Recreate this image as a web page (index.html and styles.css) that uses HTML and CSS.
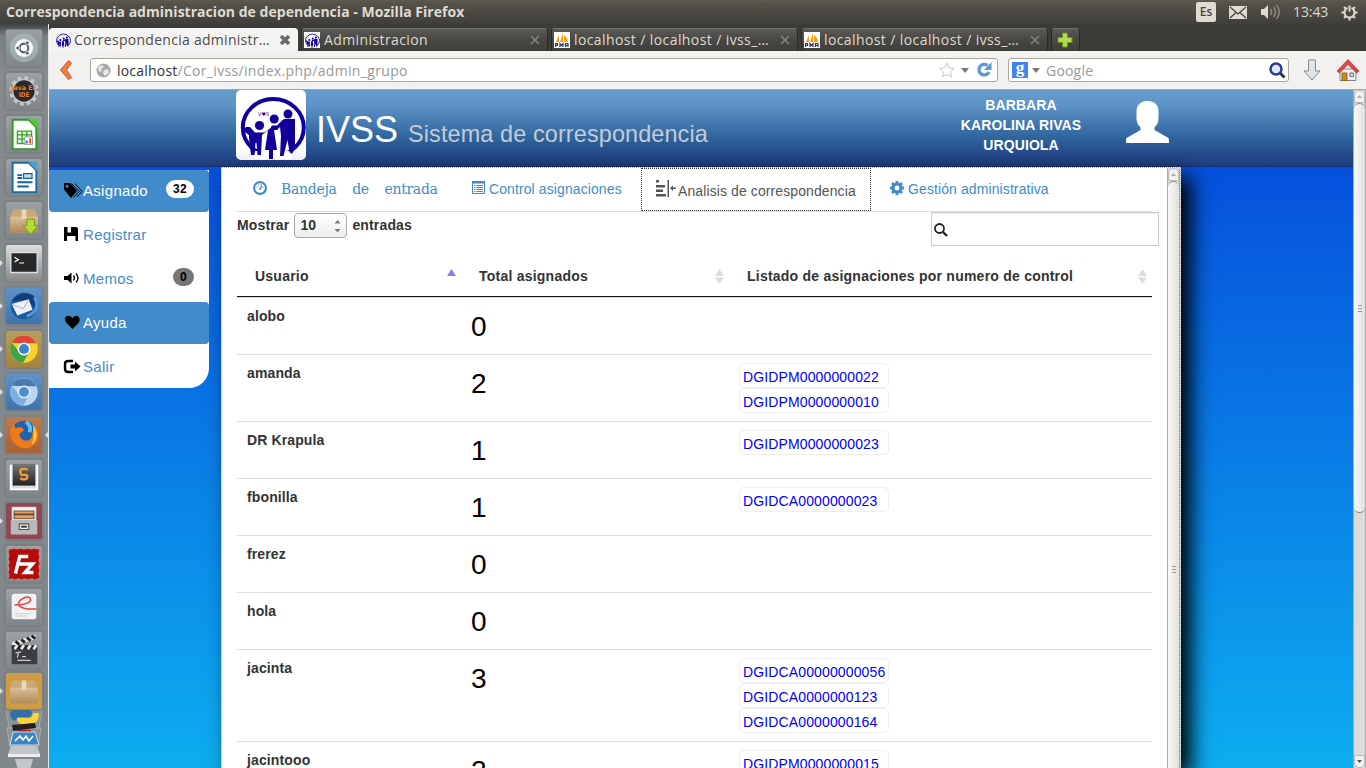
FILE: index.html
```html
<!DOCTYPE html>
<html lang="es">
<head>
<meta charset="utf-8">
<title>Correspondencia administracion de dependencia</title>
<link rel="stylesheet" href="styles.css">
</head>
<body>
<svg width="0" height="0" class="defs">
  <defs>
    <linearGradient id="steel" x1="0" y1="0" x2="0" y2="1"><stop offset="0" stop-color="#777"/><stop offset="1" stop-color="#222"/></linearGradient>
    <linearGradient id="carton" x1="0" y1="0" x2="0" y2="1"><stop offset="0" stop-color="#dcc09a"/><stop offset="1" stop-color="#b08a59"/></linearGradient>
    <symbol id="logo" viewBox="0 0 70 70">
      <ellipse cx="37.300" cy="37.500" rx="30.500" ry="28.500" fill="none" stroke="#12009a" stroke-width="4"/>
      <path d="M19 61h37v8H19z" fill="#fff"/>
      <g fill="#12009a"><circle cx="23.500" cy="35.500" r="4.600"/><circle cx="38.200" cy="29" r="4.500"/><circle cx="52" cy="24" r="4.500"/>
      <path d="M10 37l4 0 5 5.500h9l6-4 2-3h5l5-5 2-1.500h11v29l-3 6-2.500-2-2-12-4 16h-3.500l1-20-1-9-3 3h-3l3 20h-4v9h-4v-9h-4l3-20-6 5-1 20h-3.500l-1-12h-1l-1 12h-3.500l-2-17 0-3-7-5z"/></g>
    </symbol>
    <symbol id="pma" viewBox="0 0 16 16"><path fill="#fff" d="M0 0h16v16H0z"/><path fill="#f89c0e" d="M2 10L5 3v7zM6 10L9 1v9zM10 10V3q3 2 4 7z"/><path d="M1.500 15v-3.500h2v2h-2M6 15v-3.500l1.500 2 1.500-2V15M11.500 15v-3.500h2.500V15M11.500 13.500H14" stroke="#335" fill="none" stroke-width="1.200"/></symbol>
    <symbol id="box" viewBox="0 0 32 32"><path fill="#c9a877" d="M4 4h24l3 8v17H1V12z"/><path fill="url(#carton)" d="M1 12h30v17H1z"/><path fill="#ead9bb" d="M13.500 4h5v10h-5z"/></symbol>
    <symbol id="sort" viewBox="0 0 9 15"><path fill="#dcdcdc" d="M4.500 0L9 7H0zM0 8.500h9L4.500 15z"/></symbol>
  </defs>
</svg>

<header class="titlebar">
  <span class="wintitle">Correspondencia administracion de dependencia - Mozilla Firefox</span>
  <div class="tray">
    <span class="lang">Es</span>
    <svg width="18" height="13" viewBox="0 0 18 13"><path fill="#dfdbd2" d="M0 0h18v13H0z"/><path d="M1 1l8 7 8-7M1 12l6-5.500M17 12l-6-5.500" stroke="#45433d" fill="none" stroke-width="1.300"/></svg>
    <svg class="vol" width="21" height="16" viewBox="0 0 21 16"><path fill="#dfdbd2" d="M1 5h3l4-4v14l-4-4H1z"/><path d="M10.500 5q2 3 0 6M13.500 3q4 5 0 10M16.500 1q5.500 7 0 14" stroke="#8a8880" fill="none" stroke-width="1.500"/></svg>
    <span class="clock">13:43</span>
    <svg class="gear" width="17" height="17" viewBox="-8.500 -8.500 17 17"><g stroke="#dfdbd2" fill="none" stroke-width="2"><path d="M-2 -4.600A5 5 0 1 0 2 -4.600M0 -7v6"/><path d="M5 0h3M-8 0h3M3.500 3.500l2 2M-3.500 3.500l-2 2M0 5v3M3.500-3.500l2-2M-3.500-3.500l-2-2"/></g></svg>
  </div>
</header>

<div class="desktop">
<nav class="dock">
  <div class="tile"><svg viewBox="0 0 38 38"><circle cx="19" cy="19" r="15" fill="#b5c3c6" opacity=".55"/><circle cx="19" cy="19" r="9.500" fill="#fff"/><circle cx="19" cy="19" r="4.600" fill="none" stroke="#565c60" stroke-width="2.200"/><g fill="#565c60" stroke="#fff" stroke-width=".8"><circle cx="12.500" cy="19" r="2"/><circle cx="22.500" cy="13.500" r="2"/><circle cx="22.500" cy="24.500" r="2"/></g></svg></div>
  <div class="tile"><svg viewBox="0 0 38 38"><circle cx="19" cy="19" r="13.500" fill="none" stroke="#c5c7c8" stroke-width="4" stroke-dasharray="4 3.070"/><circle cx="19" cy="19" r="12" fill="#2a282b" stroke="#c5c7c8" stroke-width="1.500"/><text x="5.500" y="18" class="jee" textLength="27" lengthAdjust="spacingAndGlyphs">Java EE</text><text x="13.500" y="25" class="jee" textLength="11" lengthAdjust="spacingAndGlyphs">IDE</text></svg></div>
  <div class="tile"><svg viewBox="0 0 38 38"><path d="M7 4h17l8 8v23H7z" fill="#fff" stroke="#2d9a1c" stroke-width="2"/><path d="M23 3h10v10z" fill="#55c63a"/><path d="M12 16h15v13H12zM12 20h15M12 24.500h15M17 16v13M22 16v13" fill="#e7f6e4" stroke="#36a324" stroke-width="1.400"/><path d="M20 22h8v8h-8z" fill="#fff" stroke="#999"/><path d="M22 26v3" stroke="#27d" stroke-width="2"/><path d="M25.500 23.500V29" stroke="#e42" stroke-width="2"/></svg></div>
  <div class="tile"><svg viewBox="0 0 38 38"><path d="M7 4h17l8 8v23H7z" fill="#fff" stroke="#1a6a9e" stroke-width="2"/><path d="M23 3h10v10z" fill="#4ba0cf"/><path d="M12 17h5M12 20h5M12 24.500h16M12 29h12" stroke="#12639b" stroke-width="2"/><path d="M18.500 15.500h9v5h-9z" fill="#bde" stroke="#12639b" stroke-width="1.200"/></svg></div>
  <div class="tile"><svg viewBox="0 0 38 38"><use href="#box" x="3" y="4" width="32" height="31"/><path d="M22 18h8v7h4l-8 9-8-9h4z" fill="#b5db36" stroke="#6d9a12"/></svg></div>
  <div class="tile run term"><svg viewBox="0 0 38 38"><path d="M5 8h28v21H5z" fill="#26282a" stroke="#ddd" stroke-width="1.500"/><path d="M9 13l4 2.500-4 2.500M14 19h5" stroke="#fff" fill="none" stroke-width="1.300"/></svg></div>
  <div class="tile run blue"><svg viewBox="0 0 38 38"><circle cx="19" cy="19" r="14" fill="#1d5a9d"/><path d="M6 14Q16 1 29 8q7 7 1 16Q28 10 6 14z" fill="#123f78"/><path d="M6 17l18-5 4 11-16 6z" fill="#eef1f3"/><path d="M6 17l12 5 6-10" stroke="#aab" fill="none"/><path d="M30 10q7 14-8 20" stroke="#4d9be0" stroke-width="3" fill="none"/></svg></div>
  <div class="tile run gold"><svg viewBox="0 0 38 38"><circle cx="19" cy="19" r="14.500" fill="#fad02c"/><path d="M6 12.500A14.500 14.500 0 0 1 32 13H19z" fill="#df4436"/><path d="M6 12.500A14.500 14.500 0 0 0 18 33.500l6-10.500-10-1z" fill="#3fa648"/><circle cx="19" cy="19" r="6.800" fill="#fff"/><circle cx="19" cy="19" r="5.300" fill="#3f82d0"/></svg></div>
  <div class="tile run blue"><svg viewBox="0 0 38 38"><circle cx="19" cy="19" r="14.500" fill="#b9d5f2"/><path d="M6 12.500A14.500 14.500 0 0 1 32 13H19z" fill="#4879b3"/><path d="M6 12.500A14.500 14.500 0 0 0 18 33.500l6-10.500-10-1z" fill="#7daee0"/><circle cx="19" cy="19" r="6.800" fill="#e8f1fb"/><circle cx="19" cy="19" r="5.300" fill="#4f8ccb"/></svg></div>
  <div class="tile run current orange"><svg viewBox="0 0 38 38"><circle cx="19" cy="18" r="14" fill="#2463ac"/><path d="M21 5q6 4 4 11" stroke="#5cc4ef" stroke-width="4" fill="none"/><path d="M5 12l3-5 2 5q7-3 9 2l-5 4q1 7 8 7 6-1 6-9l3-7q7 14-2 21-9 6-18 0Q2 23 5 12z" fill="#ef7a1a"/><path d="M28 7q9 14-1 22 4-8 1-22z" fill="#fbd43a"/></svg></div>
  <div class="tile"><svg viewBox="0 0 38 38"><path d="M5 5v26h28V5" fill="#ddd" stroke="#fff" stroke-width="2"/><path d="M7 4h24v23H7z" fill="url(#steel)"/><path d="M23 10q-8-2-8 2.500t5 3q4 1 2 4-3 2-7 0" fill="none" stroke="#f3993a" stroke-width="2.600"/></svg></div>
  <div class="tile run wine"><svg viewBox="0 0 38 38"><path d="M6 4h26v29H6z" fill="#d8d8d8"/><path d="M7 5h24v13H7z" fill="#eee"/><path d="M8 8h22v9H8z" fill="#5b4a42"/><path d="M9 9h20v2H9zM9 13h20v3H9z" fill="#f09a5c"/><path d="M5 18h28v15H5z" fill="#b8b8b8"/><path d="M14 22h10v6H14z" fill="#eee" stroke="#555" stroke-width="1.200"/><path d="M16 25h6" stroke="#333" stroke-width="2"/></svg></div>
  <div class="tile"><svg viewBox="0 0 38 38"><path d="M3 3h32v32H3z" fill="#b50b0b" stroke="#db9090" stroke-dasharray="4 3"/><path d="M10 29l4.500-18h9M12 19h8M19 19h9l-8 9h9" stroke="#fff" stroke-width="3.600" fill="none"/></svg></div>
  <div class="tile"><svg viewBox="0 0 38 38"><rect x="6" y="5" width="26" height="27" rx="3" fill="#f2f2f2"/><path d="M9 17q14 0 17-5 0-5-6-3-9 4-6 9 6 4 18 3" stroke="#e54242" stroke-width="1.600" fill="none"/><path d="M10 26h16M10 28.500h12" stroke="#ccc"/></svg></div>
  <div class="tile"><svg viewBox="0 0 38 38"><path d="M6 17h27v17H6z" fill="#3b3e40"/><path d="M6 11l25-8 1 4-25 8z" fill="#eee"/><path d="M10 10l4 3M16 8l4 3M22 6l4 3M27 4l4 3" stroke="#222" stroke-width="3"/><path d="M6 14h27v4H6z" fill="#222"/><path d="M9 18l3-4M16 18l3-4M23 18l3-4M29 18l3-4" stroke="#eee" stroke-width="3"/><path d="M10 22l6-1M13 22l-1 5M17 26h4M12 30h14" stroke="#ccc" stroke-width="1.300"/></svg></div>
  <div class="tile run gold2"><svg viewBox="0 0 38 38"><use href="#box" x="3" y="4" width="32" height="31"/></svg></div>
  <svg class="stack" width="38" height="62" viewBox="0 0 38 62"><path d="M1 0h36l-3 20H4zM2 20h34l-3 20H5z" fill="#8d9295" stroke="#a5aaad"/><path d="M5 5q0-4 13-4 9 0 9 4t-5 4h-9l-3 4q-5-2-5-8z" fill="#2f71a8"/><path d="M34 5q0 10-6 10h-4q-1 2-8 1-5-2-4-6h13q3-2 3-5z" fill="#f9d33a"/><path d="M7 17l23-2 1 5-23 3z" fill="#222"/><path d="M12 23h14" stroke="#b22" stroke-width="2"/><path d="M8 24h22l4 13H5z" fill="#3c85c0" stroke="#cde"/><path d="M10 33l5-5 3 4 3-4 3 5 4-5" stroke="#fff" stroke-width="1.500" fill="none"/><path d="M6 38h26l3 8H3z" fill="#c3c6c8"/><path d="M3 46h32v3H3z" fill="#eee"/><path d="M10 51h18l-3 11H13z" fill="#c5c8c9"/></svg>
</nav>

<section class="browser">
  <div class="tabs">
    <div class="tab on"><svg width="16" height="16"><use href="#logo"/></svg><span class="t1">Correspondencia administr…</span><svg class="x" width="12" height="12" viewBox="0 0 12 12"><path d="M2 2l8 8M10 2l-8 8" stroke="#6a6a6a" stroke-width="3.600"/></svg></div>
    <div class="tab"><svg class="white" width="16" height="16"><use href="#logo"/></svg><span class="t2">Administracion</span><svg class="x" width="10" height="10" viewBox="0 0 10 10"><path d="M1 1l8 8M9 1L1 9" stroke="#85837e" stroke-width="1.600"/></svg></div>
    <div class="tab"><svg width="16" height="16"><use href="#pma"/></svg><span class="t3">localhost / localhost / ivss_…</span><svg class="x" width="10" height="10" viewBox="0 0 10 10"><path d="M1 1l8 8M9 1L1 9" stroke="#85837e" stroke-width="1.600"/></svg></div>
    <div class="tab"><svg width="16" height="16"><use href="#pma"/></svg><span class="t3">localhost / localhost / ivss_…</span><svg class="x" width="10" height="10" viewBox="0 0 10 10"><path d="M1 1l8 8M9 1L1 9" stroke="#85837e" stroke-width="1.600"/></svg></div>
    <div class="tab plus"><svg width="16" height="16" viewBox="0 0 16 16"><path d="M5.500 1h5v4.500H15v5h-4.500V15h-5v-4.500H1v-5h4.500z" fill="#b5d957" stroke="#66951b"/></svg></div>
  </div>
  <div class="toolbar">
    <svg class="back" width="14" height="22" viewBox="0 0 14 22"><path d="M9.500 1.500L1.500 11l8 9.500 3-2L7.500 11l5-7z" fill="#ee7f43" stroke="#c85a24"/></svg>
    <div class="field url">
      <svg width="15" height="15" viewBox="0 0 15 15"><circle cx="7.500" cy="7.500" r="7" fill="#a9a9a9"/><path d="M2 4l4-2 2 2-3 2 1 2-3 1zM8 7l4-1 1 4-4 3-2-3z" fill="#e8e8e8"/></svg>
      <span class="addr"><b>localhost</b>/Cor_ivss/index.php/admin_grupo</span>
      <svg class="star" width="16" height="16" viewBox="0 0 16 16"><path d="M8 1l2.200 4.700 5 .7-3.700 3.500 1 5L8 12.500 3.500 15l1-5L.8 6.400l5-.7z" fill="#fff" stroke="#c5c8cc"/></svg>
      <svg class="dd" width="8" height="5" viewBox="0 0 8 5"><path d="M0 0h8L4 5z" fill="#777"/></svg>
      <svg class="reload" width="16" height="16" viewBox="0 0 16 16"><path d="M11.500 3.500A5.300 5.300 0 1 0 13 10" fill="none" stroke="#5b9bcd" stroke-width="3.400"/><path d="M15.500 0v8H8z" fill="#5b9bcd"/></svg>
    </div>
    <div class="field search">
      <span class="gbox">g</span>
      <svg class="dd" width="8" height="5" viewBox="0 0 8 5"><path d="M0 0h8L4 5z" fill="#777"/></svg>
      <span class="ph">Google</span>
      <svg class="lens" width="17" height="17" viewBox="0 0 17 17"><path d="M11 11l4.500 4.500" stroke="#333" stroke-width="3"/><circle cx="7" cy="7" r="5.500" fill="#dfe8fa" stroke="#2a3c92" stroke-width="2.500"/></svg>
    </div>
    <svg class="down" width="18" height="22" viewBox="0 0 18 22"><path d="M5.500 1h7v11H17l-8 9-8-9h4.500z" fill="#dfe5e8" stroke="#868a8c"/></svg>
    <svg class="home" width="22" height="22" viewBox="0 0 22 22"><path d="M3 10h16v11.500H3z" fill="#eee" stroke="#888"/><path d="M11 .5L22 12l-2.500 2L11 5.500 2.500 14 0 12z" fill="#d94a4d" stroke="#a92e31" stroke-width=".7"/><path d="M5 14h5v7.500H5z" fill="#d08a1c" stroke="#86550a" stroke-width=".8"/><path d="M13 14h3.500v3.500H13z" fill="#cde" stroke="#678"/></svg>
  </div>

  <div class="view">
  <div class="page">
    <div class="banner">
      <div class="brandlogo"><svg width="70" height="70"><use href="#logo"/></svg><span>V♥S</span></div>
      <h1>IVSS <small>Sistema de correspondencia</small></h1>
      <div class="user">BARBARA<br>KAROLINA RIVAS<br>URQUIOLA</div>
      <svg class="avatar" width="43" height="42" viewBox="0 0 43 42"><path fill="#fff" d="M21.500 0C29 0 32.500 4 32.500 11v5c0 5-1 8-4 10v3l14 8c.5 2 .5 3 .5 5H0c0-2 0-3 .5-5l14-8v-3c-3-2-4-5-4-10v-5C10.500 4 14 0 21.500 0z"/></svg>
    </div>
    <div class="main">
      <ul class="side">
        <li class="on"><svg class="tags" width="20" height="16" viewBox="0 0 20 16"><path d="M1 0h6l7 8-6 7L1 6.500zM4 1.800a1.500 1.500 0 1 0 .1 0z" fill-rule="evenodd"/><path d="M8.500.5L16 8.500l-5.500 6M12 .5l7 8-5 5.500" fill="none" stroke="#000" stroke-width="1"/></svg>Asignado<span class="badge w">32</span></li>
        <li><svg width="20" height="16" viewBox="0 0 20 16"><path d="M1 0H4.500v5.500H8V0h5.500L15 1.500V14h-2.500V9H4v5H1zM8.500 0H11v4H8.500z"/></svg>Registrar</li>
        <li><svg width="20" height="16" viewBox="0 0 20 16"><path d="M1 5h3.500l4-3.500v11l-4-3.500H1z"/><path d="M10.500 4.500q2 2.500 0 5M13 2.500q4 4.500 0 9" fill="none" stroke="#000" stroke-width="1.300"/></svg>Memos<span class="badge g">0</span></li>
        <li class="on"><svg width="20" height="16" viewBox="0 0 20 16"><path d="M9.500 14L3 7.500Q1 4 3 1.500 6.500-.5 9.500 3 12.500-.5 15.500 1.500 17.500 4 16 7.500z"/></svg>Ayuda</li>
        <li><svg width="20" height="16" viewBox="0 0 20 16"><path d="M10 2H5.500Q2 2 2 5v5q0 3 3.500 3H10" fill="none" stroke="#000" stroke-width="2.400"/><path d="M7.500 5.500H12v-3l5.500 5-5.500 5v-3H7.500z"/></svg>Salir</li>
      </ul>
      <div class="panel">
        <div class="inner">
          <ul class="nav">
            <li class="dash"><svg width="14" height="14" viewBox="0 0 14 14"><circle cx="7" cy="7" r="5.900" fill="none" stroke="#428bca" stroke-width="2.100"/><path d="M6.500 9L9 4.500" stroke="#428bca" stroke-width="1.500"/><path d="M3.500 6h1M5 4h1M7.500 3.500h1M9.500 6.500h1" stroke="#428bca"/></svg><span>Bandeja de entrada</span></li>
            <li class="ctl"><svg width="13" height="13" viewBox="0 0 13 13"><path d="M.5.5h12v12H.5z" fill="none" stroke="#428bca"/><path d="M0 0h13v2.500H0zM2 4h1.500v1H2zM2 6h1.500v1H2zM2 8h1.500v1H2zM2 10h1.500v1H2zM4.500 4H11v1H4.500zM4.500 6H11v1H4.500zM4.500 8H11v1H4.500zM4.500 10H11v1H4.500z" fill="#428bca"/></svg><span>Control asignaciones</span></li>
            <li class="cur"><svg width="20" height="17" viewBox="0 0 20 17"><path d="M0 0h3v2.500H0zM0 5h9v2.500H0zM0 9.500h7V12H0zM0 14h10v2.500H0zM11.500 0H13v17h-1.500zM14 8l3-2.500v2h3v1.500h-3v2z" fill="#555"/></svg><span>Analisis de correspondencia</span></li>
            <li class="ges"><svg width="14" height="14" viewBox="-7 -7 14 14"><circle r="3.900" fill="none" stroke="#428bca" stroke-width="3"/><path d="M0-7v3M0 7V4M-7 0h3M7 0H4M-5-5l2 2M5 5L3 3M-5 5l2-2M5-5L3-3" stroke="#428bca" stroke-width="2.800"/></svg><span>Gestión administrativa</span></li>
          </ul>
          <div class="controls">
            <label>Mostrar <span class="select">10<svg width="7" height="13" viewBox="0 0 7 13"><path d="M3.500 0L6.500 3.500h-6zM.5 9h6l-3 3.500z" fill="#777"/></svg></span> entradas</label>
            <div class="filter"><svg width="14" height="14" viewBox="0 0 14 14"><circle cx="5.500" cy="5.500" r="4.500" fill="none" stroke="#222" stroke-width="1.800"/><path d="M9 9l4 4" stroke="#222" stroke-width="2.400"/></svg></div>
          </div>
          <div class="grid head">
            <div>Usuario<svg width="9" height="8" viewBox="0 0 9 8" class="asc"><path d="M4.500 0L9 7H0z" fill="#7f82e0"/></svg></div>
            <div>Total asignados<svg width="9" height="15"><use href="#sort"/></svg></div>
            <div>Listado de asignaciones por numero de control<svg width="9" height="15"><use href="#sort"/></svg></div>
          </div>
          <div class="grid row"><b>alobo</b><span class="n">0</span><div></div></div>
          <div class="grid row"><b>amanda</b><span class="n">2</span><div><a>DGIDPM0000000022</a><a>DGIDPM0000000010</a></div></div>
          <div class="grid row"><b>DR Krapula</b><span class="n">1</span><div><a>DGIDPM0000000023</a></div></div>
          <div class="grid row"><b>fbonilla</b><span class="n">1</span><div><a>DGIDCA0000000023</a></div></div>
          <div class="grid row"><b>frerez</b><span class="n">0</span><div></div></div>
          <div class="grid row"><b>hola</b><span class="n">0</span><div></div></div>
          <div class="grid row"><b>jacinta</b><span class="n">3</span><div><a>DGIDCA00000000056</a><a>DGIDCA0000000123</a><a>DGIDCA0000000164</a></div></div>
          <div class="grid row"><b>jacintooo</b><span class="n">2</span><div><a>DGIDPM0000000015</a></div></div>
        </div>
        <div class="sbar in"><div class="cap"><svg width="5" height="3" viewBox="0 0 5 3"><path d="M0 3h5L2.500 0z" fill="#aaa"/></svg></div><div class="thumb"><i></i></div></div>
      </div>
    </div>
  </div>
  <div class="sbar out"><div class="cap"><svg width="5" height="3" viewBox="0 0 5 3"><path d="M0 3h5L2.500 0z" fill="#aaa"/></svg></div><div class="thumb"><i></i></div><div class="track"></div><div class="cap b"><svg width="5" height="3" viewBox="0 0 5 3"><path d="M0 0h5L2.500 3z" fill="#555"/></svg></div></div>
  </div>
</section>
</div>
</body>
</html>
```
FILE: styles.css
```css
* { box-sizing: border-box; }
body { margin: 0; width: 1366px; height: 768px; overflow: hidden; display: flex; flex-direction: column; font: 14px/20px "Liberation Sans", Arial, sans-serif; color: #333; }
svg { display: block; flex: none; }
ul { list-style: none; margin: 0; padding: 0; }
.defs { position: absolute; }

.titlebar { height: 24px; flex: none; display: flex; align-items: center; justify-content: space-between; padding: 0 8px 0 6px; background: linear-gradient(#5f5d52, #57544b 8%, #3f3e3a); color: #dfdbd2; font-family: "Open Sans", sans-serif; white-space: nowrap; }
.wintitle { font-weight: 700; font-size: 14px; letter-spacing: .03px; }
.tray { display: flex; align-items: center; }
.lang { width: 20px; height: 20px; border-radius: 2px; background: #dfdbd2; color: #45433d; font-size: 12px; font-weight: 600; text-align: center; line-height: 20px; margin-right: 13px; }
.vol { margin-left: 13px; }
.clock { margin: 0 12px; font-size: 14px; width: 36px; letter-spacing: -.1px; }

.desktop { flex: 1; min-height: 0; display: flex; }
.dock { width: 49px; flex: none; overflow: hidden; padding: 5px 0 0 5px; display: flex; flex-direction: column; gap: 5px; background: linear-gradient(#3f4243, #7b8184 12px, #858b8e 50px, #80878a); border-right: 1px solid #e6e6e6; }
.tile { position: relative; flex: none; width: 38px; height: 38px; border-radius: 3px; background: linear-gradient(#9ba1a4, #7e8689); border: 1px solid #7c8285; box-shadow: 0 0 2px #666; }
.tile svg { width: 36px; height: 36px; }
.jee { font: bold 7px "DejaVu Sans", sans-serif; fill: #ee7c26; }
.tile.term { background: linear-gradient(#ddd, #888); }
.tile.blue { background: linear-gradient(#5f92c8, #3e73ae); }
.tile.gold { background: linear-gradient(#b79d5c, #a28440); }
.tile.gold2 { background: #cf9b45; margin-top: -2px; }
.tile.orange { background: linear-gradient(#bd7b4f, #a76033); }
.tile.wine { background: #914653; }
.run::before { content: ""; position: absolute; left: -6px; top: 15px; border: 3px solid transparent; border-left-color: #ddd; border-right: 0; }
.current::after { content: ""; position: absolute; right: -6px; top: 15px; border: 3px solid transparent; border-right-color: #ddd; border-left: 0; }
.stack { margin-top: -7px; }

.browser { flex: 1; min-width: 0; display: flex; flex-direction: column; }
.tabs { height: 27px; flex: none; display: flex; align-items: flex-end; gap: 3px; background: #3c3b37; font-family: "Open Sans", sans-serif; }
.tab { width: 247px; height: 23px; display: flex; align-items: center; padding: 0 7px 0 2px; border: 1px solid #2b2a27; border-top-color: #73716c; border-bottom: 0; border-radius: 4px 4px 0 0; background: linear-gradient(#5a5955, #484743 50%, #3f3e3a); color: #dfdbd2; font-size: 14px; white-space: nowrap; }
.tab span { margin-left: 4px; }
.tab .x { margin-left: auto; }
.tab.on { width: 249px; background: #f5f4f2; color: #4c4c4c; border-color: #f8f8f8; padding: 0 6px 0 5px; }
.tab.on span { margin-left: 3px; }
.t1 { letter-spacing: .28px; }
.t2 { letter-spacing: .4px; }
.t3 { letter-spacing: .4px; }
.tab.plus { width: 29px; padding: 0 5px; }
.white { background: #fff; }
.toolbar { height: 39px; flex: none; display: flex; align-items: center; padding: 0 6px 0 10px; background: #f2f1f0; border-bottom: 1px solid #aaa59f; font-family: "Open Sans", sans-serif; white-space: nowrap; }
.field { height: 24px; background: #fff; border: 1px solid #aaa79f; border-radius: 3px; display: flex; align-items: center; font-size: 14px; }
.url { width: 908px; margin-left: 17px; padding: 0 5px; }
.addr { margin: 1px 0 0 6px; color: #999; letter-spacing: .33px; }
.addr b { font-weight: 400; color: #333; letter-spacing: .2px; }
.star { margin-left: auto; margin-right: 6px; }
.url .dd { margin-right: 7px; }
.search { width: 281px; margin-left: 10px; padding: 0 2px 0 3px; }
.gbox { width: 16px; height: 16px; background: #4380f5; color: #fff; font: bold 17px/12px "Liberation Serif", serif; text-align: center; }
.search .dd { margin: 0 6px 0 4px; }
.ph { color: #999; letter-spacing: .2px; margin-top: 1px; }
.lens { margin-left: auto; }
.down { margin-left: 14px; }
.home { margin-left: auto; margin-right: 1px; }

.view { flex: 1; min-height: 0; display: flex; }
.page { width: 1304px; display: flex; flex-direction: column; overflow: hidden; background: linear-gradient(#0650dc 77px, #0dadf0); }
.banner { height: 77px; flex: none; display: flex; padding-left: 187px; background: linear-gradient(#669bcc, #5d93c6 20%, #31669f 60%, #24488a 85%, #223f80 97%, #122f72); color: #fff; }
.brandlogo { position: relative; width: 70px; height: 70px; background: linear-gradient(#fff 85%, #eee); border-radius: 5px; }
.brandlogo span { position: absolute; left: 22px; top: 20px; font: 5px/8px "DejaVu Sans", sans-serif; color: #12009a; }
h1 { margin: 20px 0 0 10px; font-weight: 400; font-size: 36px; line-height: 40px; width: 620px; white-space: nowrap; }
small { font-size: 23.400px; color: #c4cbd6; letter-spacing: .13px; }
.user { width: 170px; margin: 5px 0 0 0; text-align: center; font-weight: 700; line-height: 20px; letter-spacing: .1px; }
.avatar { margin: 11px 0 0 20px; }

.main { flex: 1; min-height: 0; display: flex; }
.side { width: 160px; height: 218px; margin: 3px 12px 0 0; background: #fff; border-radius: 4px 0 20px 0; display: flex; flex-direction: column; gap: 2px; font-size: 15px; letter-spacing: .3px; color: #428bca; }
.side li { height: 42px; padding: 0 15px 0 14px; display: flex; align-items: center; }
.side .on { background: #428bca; color: #fff; border-radius: 4px; }
.badge { margin-left: auto; min-width: 10px; padding: 3px 7px; border-radius: 10px; font-weight: 700; font-size: 12px; line-height: 12px; color: #000; margin-top: -4px; }
.w { background: #fff; }
.g { background: #777; }
.panel { width: 960px; display: flex; background: #fff; border: 1px dotted #aaa; border-bottom: 0; box-shadow: 10px 10px 20px #000; }
.inner { flex: 1; padding-left: 15px; overflow: hidden; }
.nav { width: 915px; height: 44px; display: flex; border-bottom: 1px solid #ddd; color: #428bca; letter-spacing: .1px; }
.nav li { display: flex; padding-top: 11px; white-space: nowrap; }
.nav svg { margin-top: 2px; }
.dash { width: 219px; padding-left: 16px; font-family: "DejaVu Serif", serif; word-spacing: 11.500px; letter-spacing: -.3px; }
.dash span { margin-left: 14px; }
.ctl { width: 185px; padding-left: 16px; }
.ctl span, .ges span { margin-left: 4px; }
.nav .cur { width: 230px; height: 43px; padding: 12px 0 0 14px; border: 1px dotted #333; color: #555; background: #fff; }
.nav .cur svg { margin-top: -1px; }
.cur span { margin-left: 2px; }
.ges { padding-left: 19px; }
.controls { height: 35px; display: flex; justify-content: space-between; font-weight: 700; padding-right: 8px; }
label { display: flex; align-items: center; height: 26px; gap: 5px; letter-spacing: .15px; }
.select { width: 53px; height: 25px; border: 1px solid #aaa; border-radius: 4px; background: linear-gradient(#fff, #eee); display: flex; justify-content: space-between; align-items: center; padding: 0 5px; }
.select svg { margin-top: 3px; }
.filter { width: 228px; height: 34px; border: 1px solid #ccc; padding: 10px 0 0 2px; box-shadow: inset 0 1px 1px #eee; }
.grid { width: 915px; display: grid; grid-template-columns: 224px 268px 423px; }
.head { height: 50px; border-bottom: 1px solid #111; font-weight: 700; letter-spacing: .23px; }
.head div { display: flex; align-items: center; justify-content: space-between; padding: 9px 5px 0 18px; white-space: nowrap; }
.asc { margin-top: -7px; }
.row { border-top: 1px solid #ddd; padding: 8px 0; min-height: 57px; }
.row > * { padding-left: 10px; }
.row b { letter-spacing: .12px; }
.n { font-size: 28px; line-height: 40px; padding-top: 1px; margin-bottom: -1px; color: #000; }
.row a { display: block; width: 150px; height: 25px; border: 1px solid #eee; border-radius: 5px; padding: 3px; color: #00f; line-height: 20px; letter-spacing: .13px; }

.sbar { display: flex; flex-direction: column; flex: none; width: 13px; background: #dcdbd9; border: solid #aaa; border-width: 0 1px; }
.cap { height: 13px; flex: none; display: flex; align-items: center; justify-content: center; border: 1px solid #bbb; border-radius: 5px 5px 0 0; background: #f2f1f0; }
.cap.b { border-radius: 0 0 5px 5px; }
.thumb { flex: 1; display: flex; align-items: center; justify-content: center; background: linear-gradient(90deg, #fafafa, #e0dfdd); border-top: 1px solid #888; border-radius: 6px 6px 0 0; }
.in .thumb { flex: none; height: 776px; }
.thumb i { width: 4px; height: 7px; background: repeating-linear-gradient(#999 0 1px, transparent 1px 3px); }
.out .thumb { flex: none; height: 410px; border-bottom: 1px solid #888; border-radius: 6px; }
.track { flex: 1; }
```
